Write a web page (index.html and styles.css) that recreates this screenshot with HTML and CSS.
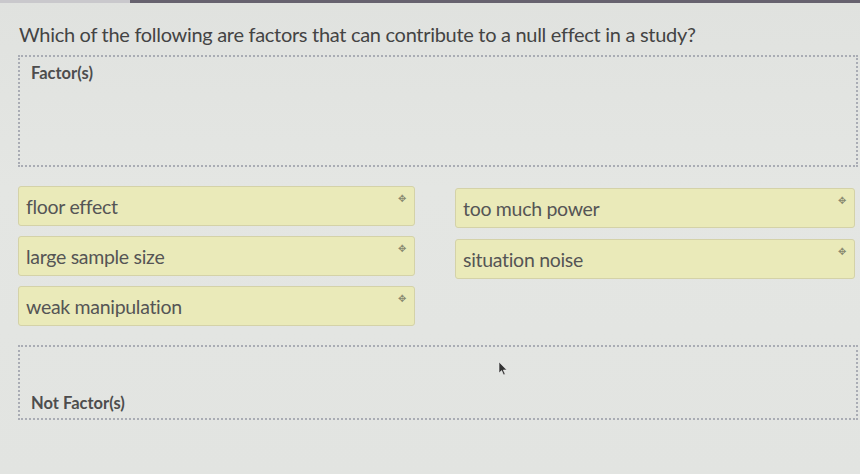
FILE: index.html
```html
<!DOCTYPE html>
<html>
<head>
<meta charset="utf-8">
<link rel="stylesheet" href="styles.css">
</head>
<body>
<div class="topbar"><div class="topbar-dark"></div></div>
<main class="page">
  <h1 class="question">Which of the following are factors that can contribute to a null effect in a study?</h1>
  <section class="zone zone-factor">
    <div class="zone-label">Factor(s)</div>
  </section>
  <section class="pool">
    <div class="col">
      <div class="item"><span>floor effect</span><span class="grip">✥</span></div>
      <div class="item"><span>large sample size</span><span class="grip">✥</span></div>
      <div class="item"><span>weak manipulation</span><span class="grip">✥</span></div>
    </div>
    <div class="col col-right">
      <div class="item"><span>too much power</span><span class="grip">✥</span></div>
      <div class="item"><span>situation noise</span><span class="grip">✥</span></div>
    </div>
  </section>
  <section class="zone zone-not">
    <div class="zone-label">Not Factor(s)</div>
    <svg class="cursor" width="10" height="15" viewBox="0 0 10 15"><path d="M1 1 L1 12 L3.6 9.6 L5.6 14 L7.2 13.3 L5.3 9 L8.8 9 Z" fill="#333" stroke="#eee" stroke-width="0.6"/></svg>
  </section>
</main>
</body>
</html>
```
FILE: styles.css
```css
html, body {
  margin: 0;
  padding: 0;
}
body {
  width: 860px;
  height: 474px;
  overflow: hidden;
  background: linear-gradient(180deg, #e0e2df 0%, #e4e6e3 40%, #e2e4e1 100%);
  font-family: Lato, "Open Sans", sans-serif;
  color: #4a4a4a;
}
.topbar {
  height: 3px;
  background: #c9c8cc;
  display: flex;
  justify-content: flex-end;
}
.topbar-dark {
  width: 730px;
  height: 3px;
  background: #67626f;
}
.page {
  padding: 0 2px 0 18px;
  position: relative;
}
.question {
  margin: 18px 0 0 1px;
  font-size: 20px;
  font-weight: 400;
  line-height: 26px;
  color: #444;
  letter-spacing: -0.3px;
}
.zone {
  border: 2px dotted #a9acb4;
  position: relative;
}
.zone-factor {
  margin-top: 8px;
  height: 108px;
}
.zone-label {
  font-size: 16.5px;
  font-weight: 700;
  color: #4d4d4d;
  padding-left: 11px;
}
.zone-factor .zone-label {
  padding-top: 6px;
}
.pool {
  display: flex;
  gap: 40px;
  margin-top: 19px;
  padding-right: 3px;
}
.col {
  flex: 0 0 397px;
  display: flex;
  flex-direction: column;
  gap: 10px;
}
.col-right {
  flex: 0 0 400px;
  margin-top: 2px;
  gap: 11px;
}
.item {
  background: #eaeab9;
  border: 1px solid #d4d2a8;
  border-radius: 3px;
  box-sizing: border-box;
  height: 40px;
  display: flex;
  align-items: center;
  justify-content: space-between;
  padding: 0 8px 0 7px;
  font-size: 19.5px;
  color: #555;
}
.item span:first-child {
  letter-spacing: -0.3px;
}
.grip {
  align-self: flex-start;
  font-size: 10px;
  color: #8a8a70;
  margin-top: 5px;
}
.zone-not {
  margin-top: 19px;
  height: 71px;
  display: flex;
  align-items: flex-end;
}
.zone-not .zone-label {
  padding-bottom: 5px;
}
.cursor {
  position: absolute;
  left: 478px;
  top: 14px;
}
```
